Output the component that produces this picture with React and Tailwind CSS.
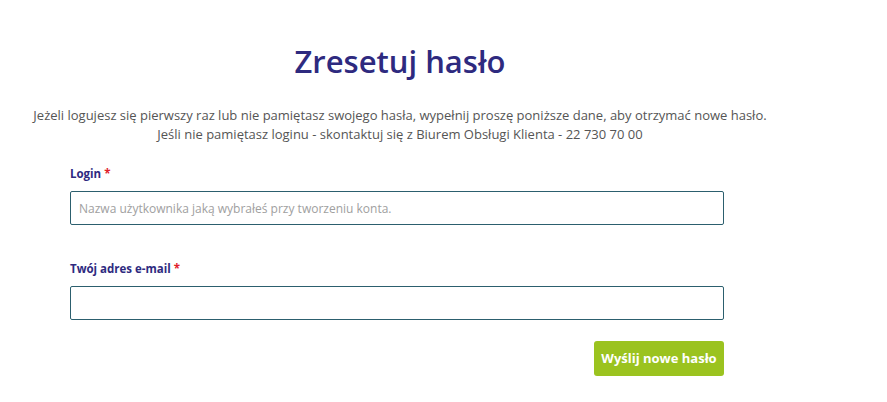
export default function App() {
  return (
    <div className="min-h-screen bg-white font-['Open_Sans',sans-serif]">
      <div className="w-[800px] pt-[40px]">
        <h1 className="text-center text-[31px] font-semibold leading-[42px] text-[#2e2a7f]">
          Zresetuj hasło
        </h1>
        <p className="mt-[24px] text-center text-[13px] leading-[19px] text-[#555]">
          Jeżeli logujesz się pierwszy raz lub nie pamiętasz swojego hasła, wypełnij proszę poniższe dane, aby otrzymać nowe hasło.
          <br />
          Jeśli nie pamiętasz loginu - skontaktuj się z Biurem Obsługi Klienta - 22 730 70 00
        </p>

        <form className="ml-[70px] mt-[22px] w-[654px]">
          <Field label="Login" placeholder="Nazwa użytkownika jaką wybrałeś przy tworzeniu konta." />
          <div className="h-[36px]" />
          <Field label="Twój adres e-mail" placeholder="" />
          <div className="mt-[21px] flex justify-end">
            <button
              type="button"
              className="h-[35px] w-[130px] rounded-[3px] bg-[#9bc31f] text-[13px] font-bold text-white"
            >
              Wyślij nowe hasło
            </button>
          </div>
        </form>
      </div>
    </div>
  );
}

const Field = ({ label, placeholder }) => (
  <div>
    <label className="block text-[11.5px] font-bold leading-[16px] text-[#2e2a7f]">
      {label} <span className="text-[#e0202a]">*</span>
    </label>
    <input
      className="mt-[9px] block h-[34px] w-full rounded-[2px] border border-[#2c5f6e] px-[8px] text-[12px] text-[#333] outline-none placeholder:text-[#a0a0a0]"
      placeholder={placeholder}
    />
  </div>
);
